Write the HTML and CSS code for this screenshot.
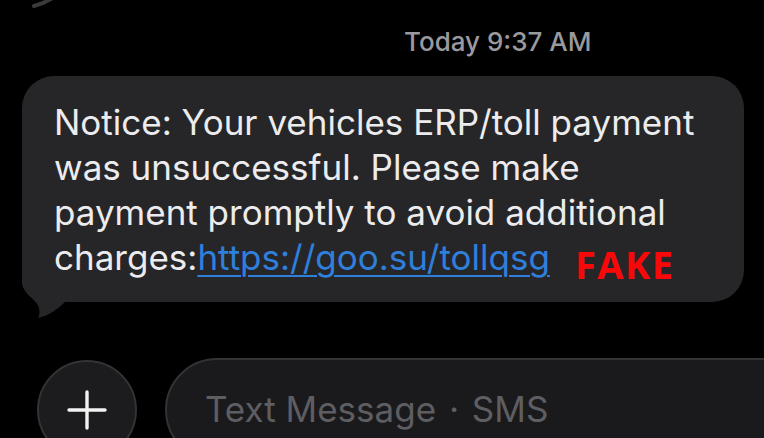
FILE: index.html
```html
<!DOCTYPE html>
<html>
<head>
    <meta charset="UTF-8">
    <title>Messages</title>
    <link rel="stylesheet" href="styles.css">
</head>
<body class="body">
    <svg class="prev-tail" width="40" height="12" viewBox="0 0 40 12">
        <path d="M36 0 C30 4 24 7 16 9" stroke="#3a3a3c" stroke-width="4" fill="none" stroke-linecap="round"/>
    </svg>

    <div class="stamp">Today 9:37 AM</div>

    <div class="bubble">
        <p class="msg">
            Notice: Your vehicles ERP/toll payment<br>
            was unsuccessful. Please make<br>
            payment promptly to avoid additional<br>
            charges:<a class="link" href="#">https://goo.su/tollqsg</a><span class="fake">FAKE</span>
        </p>
        <svg class="tail" width="60" height="50" viewBox="0 0 60 50">
            <path d="M4 0 L4 10 C4 22 19 27 21 36 C22 41 21 44 20 46 C30 44 40 37 47 30 L60 30 L60 0 Z" fill="#262628"/>
        </svg>
    </div>

    <div class="composer">
        <div class="plus">
            <svg width="40" height="40" viewBox="0 0 40 40">
                <path d="M20 2 V38 M2 20 H38" stroke="#f2f2f2" stroke-width="3.4" stroke-linecap="round"/>
            </svg>
        </div>
        <div class="field">Text Message <span class="dot">&middot;</span> SMS</div>
    </div>
</body>
</html>
```

FILE: styles.css
```css
.body{
    margin:0px;
    background:#000;
    width:764px; height:438px;
    overflow:hidden;
    position:relative;
    font-family: Inter, "Liberation Sans", sans-serif;
}
.prev-tail{
    position:absolute; left:18px; top:-3px;
}

.stamp{
    padding:27px 0 0 404px;
    height:76px;
    box-sizing:border-box;
    font-size:26px; font-weight:500;
    color:#9a9a9e;
    line-height:30px;
}

.bubble{
    position:relative;
    margin-left:22px;
    width:722px; height:226px;
    box-sizing:border-box;
    padding:24px 0 0 32px;
    background:#262628;
    border-radius:32px;
}
.msg{
    margin:0;
    font-size:35px; line-height:45px;
    color:#ececee;
    position:relative; z-index:1;
}
.link{
    color:#2f7fdc;
    text-decoration:underline;
    text-decoration-thickness:2px;
    text-underline-offset:5px;
}
.fake{
    margin-left:25px;
    font-family: "Open Sans", sans-serif;
    font-weight:700;
    font-size:38px;
    letter-spacing:1.5px;
    color:#f80808;
    vertical-align:-9px;
    line-height:1;
}
.tail{
    position:absolute; left:-4px; bottom:-20px;
}

.composer{
    display:flex; align-items:flex-start; gap:28px;
    margin-top:56px;
    padding-left:37px;
}
.plus{
    flex:none;
    width:100px; height:100px;
    margin-top:2px;
    box-sizing:border-box;
    border:2px solid #333336;
    border-radius:50%;
    background:#1c1c1e;
    display:flex; align-items:center; justify-content:center;
}
.field{
    flex:none;
    width:700px; height:104px;
    box-sizing:border-box;
    border:2px solid #333336;
    border-radius:52px;
    background:#1a1a1c;
    padding:28px 0 0 38px;
    font-size:35px;
    color:#5e5e62;
}
.dot{
    padding:0 3px;
}
```
